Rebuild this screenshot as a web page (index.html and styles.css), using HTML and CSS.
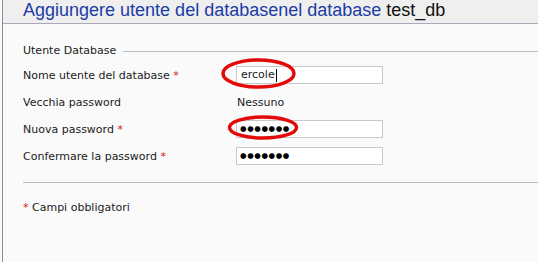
FILE: index.html
```html
<!DOCTYPE html>
<html lang="it">
<head>
<meta charset="utf-8">
<link rel="stylesheet" href="styles.css">
</head>
<body>
<div class="panel">
  <div class="header">
    <h1 class="title">Aggiungere utente del databasenel database <span class="db">test_db</span></h1>
  </div>
  <div class="content">
    <div class="legend"><span class="legend-text">Utente Database</span><span class="legend-line"></span></div>
    <div class="form">
      <div class="row">
        <span class="label">Nome utente del database <span class="req">*</span></span>
        <span class="field"><span class="input">ercole<span class="caret"></span></span></span>
      </div>
      <div class="row">
        <span class="label">Vecchia password</span>
        <span class="field"><span class="value">Nessuno</span></span>
      </div>
      <div class="row">
        <span class="label">Nuova password <span class="req">*</span></span>
        <span class="field"><span class="input dots">●●●●●●●</span></span>
      </div>
      <div class="row">
        <span class="label">Confermare la password <span class="req">*</span></span>
        <span class="field"><span class="input dots">●●●●●●●</span></span>
      </div>
    </div>
    <div class="rule"></div>
    <p class="note"><span class="req">*</span> Campi obbligatori</p>
  </div>
  <svg class="marks" width="538" height="262" viewBox="0 0 538 262">
    <ellipse cx="258.5" cy="73.5" rx="35.5" ry="13.5" fill="none" stroke="#e30a0a" stroke-width="3.5"/>
    <ellipse cx="263" cy="127.5" rx="33.5" ry="10.5" fill="none" stroke="#e30a0a" stroke-width="3.5"/>
  </svg>
</div>
</body>
</html>
```

FILE: styles.css
```css
html, body {
  margin: 0;
  padding: 0;
  background: #fafafa;
}
.panel {
  position: relative;
  width: 536px;
  height: 262px;
  margin-left: 2px;
  border-left: 1px solid #8c8c96;
  background: #fafafa;
  overflow: hidden;
}
.header {
  height: 24px;
  background: #efefef;
  border-bottom: 1px solid #a8acb8;
  box-sizing: border-box;
  padding-left: 20px;
}
.title {
  margin: 0;
  font-family: "Liberation Sans", Arial, sans-serif;
  font-weight: normal;
  font-size: 18px;
  line-height: 21px;
  color: #1c3ca6;
  white-space: nowrap;
}
.db { color: #111; }
.content {
  padding-left: 20px;
  font-family: "DejaVu Sans", Verdana, sans-serif;
  font-size: 11px;
  color: #1a1a1a;
}
.legend {
  display: flex;
  align-items: center;
  margin-top: 19px;
  height: 14px;
}
.legend-text { white-space: nowrap; }
.legend-line {
  flex: 1;
  height: 1px;
  background: #b6bcc8;
  margin-left: 7px;
  margin-top: 2px;
}
.form {
  margin-top: 9px;
  display: flex;
  flex-direction: column;
  gap: 9px;
}
.row {
  display: flex;
  align-items: center;
  height: 18px;
}
.label {
  width: 213px;
  white-space: nowrap;
}
.req { color: #d42020; }
.field { display: flex; }
.input {
  box-sizing: border-box;
  width: 147px;
  height: 18px;
  border: 1px solid #c8c8cc;
  background: #ffffff;
  padding-left: 4px;
  line-height: 16px;
  display: flex;
  align-items: center;
}
.caret {
  display: inline-block;
  width: 1px;
  height: 13px;
  background: #000;
  margin-left: 1px;
}
.dots {
  font-family: "DejaVu Sans", sans-serif;
  font-size: 7.5px;
  letter-spacing: 0.6px;
  color: #000;
  padding-left: 3px;
}
.value { padding-left: 1px; }
.rule {
  height: 1px;
  background: #b6bcc8;
  margin-top: 17px;
}
.note {
  margin: 18px 0 0 0;
}
.marks {
  position: absolute;
  left: -3px;
  top: 0;
  pointer-events: none;
}
```
